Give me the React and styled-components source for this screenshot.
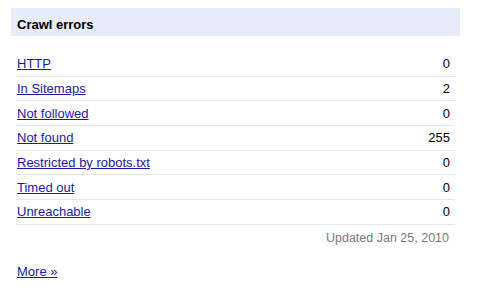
import React from "react";
import styled, { createGlobalStyle } from "styled-components";

const GlobalStyle = createGlobalStyle`
  body {
    margin: 0;
    background: #ffffff;
    font-family: "Liberation Sans", Arial, sans-serif;
    font-size: 13px;
  }
`;

const errors = [
  { name: "HTTP", count: 0 },
  { name: "In Sitemaps", count: 2 },
  { name: "Not followed", count: 0 },
  { name: "Not found", count: 255 },
  { name: "Restricted by robots.txt", count: 0 },
  { name: "Timed out", count: 0 },
  { name: "Unreachable", count: 0 },
];

// Styling
const Gadget = styled.div`
  display: flex;
  flex-direction: column;
  padding-top: 8px;
  width: 480px;
`;

const Header = styled.div`
  margin-left: 11px;
  width: 449px;
  height: 28px;
  box-sizing: border-box;
  padding: 9px 6px 0;
  background: #e8ecf8;
`;

const Title = styled.h3`
  margin: 0;
  font-size: 13px;
  line-height: 15px;
  font-weight: bold;
  color: #000;
`;

const List = styled.ul`
  list-style: none;
  margin: 16px 0 0 16px;
  padding: 0;
  width: 439px;
`;

const Row = styled.li`
  display: flex;
  align-items: center;
  justify-content: space-between;
  height: 23.67px;
  padding: 0 5px 0 1px;
  border-bottom: 1px solid #e6e6e6;
  line-height: 15px;
`;

const Link = styled.a`
  color: #1a1aa6;
  text-decoration: underline;
  cursor: pointer;
`;

const Count = styled.span`
  color: #000;
`;

const Updated = styled.div`
  margin-left: 16px;
  width: 439px;
  box-sizing: border-box;
  padding: 6px 6px 0 0;
  text-align: right;
  color: #7a7a7a;
  font-size: 12.5px;
  line-height: 15px;
`;

const More = styled.div`
  margin: 18px 0 0 17px;
  line-height: 15px;
`;

export default function App() {
  return (
    <>
      <GlobalStyle />
      <Gadget>
        <Header>
          <Title>Crawl errors</Title>
        </Header>
        <List>
          {errors.map((e) => (
            <Row key={e.name}>
              <Link>{e.name}</Link>
              <Count>{e.count}</Count>
            </Row>
          ))}
        </List>
        <Updated>Updated Jan 25, 2010</Updated>
        <More>
          <Link>More »</Link>
        </More>
      </Gadget>
    </>
  );
}
